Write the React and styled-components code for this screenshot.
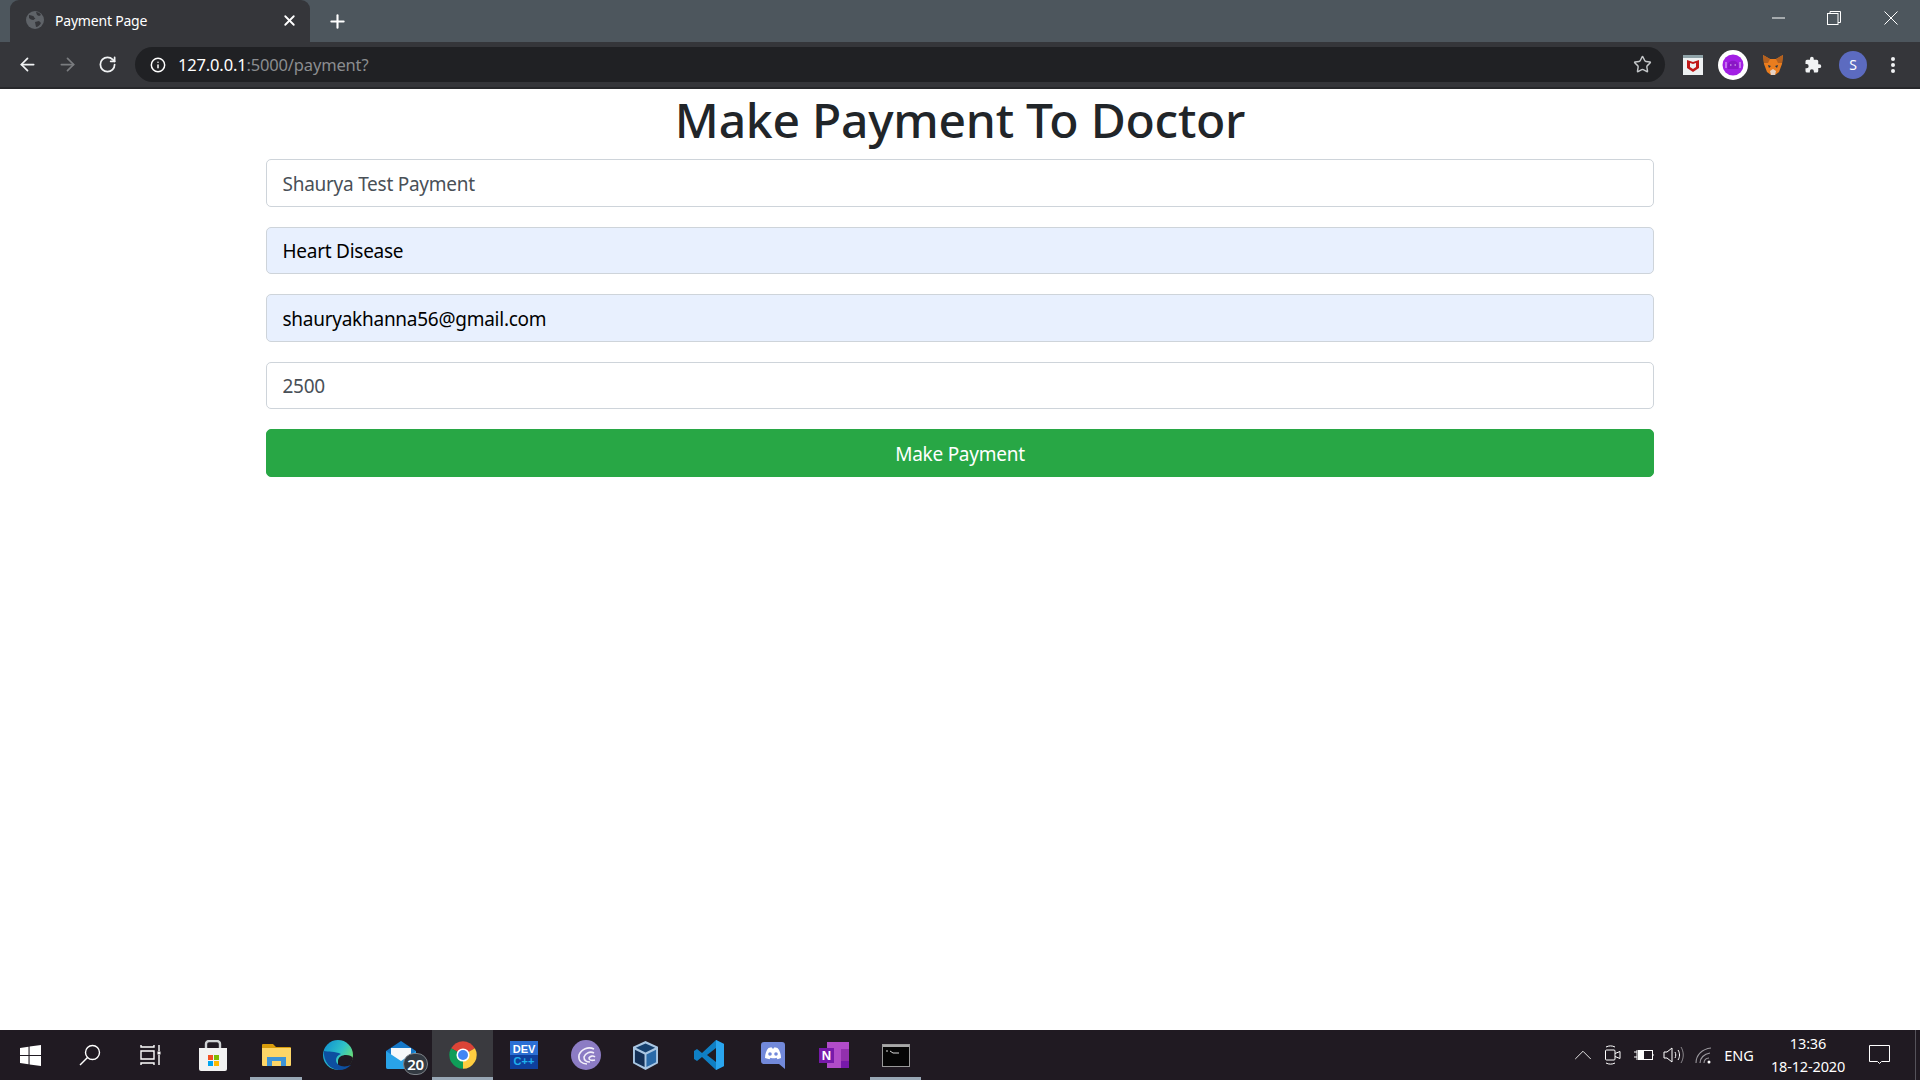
import styled, { createGlobalStyle } from "styled-components";
import { ArrowLeft, ArrowRight, RotateCw, Info, Star, X, Plus, ChevronUp } from "lucide-react";

const GlobalStyle = createGlobalStyle`
  html, body {
    margin: 0;
    padding: 0;
    background: #fff;
    overflow: hidden;
  }
  * { box-sizing: border-box; }
`;

const Screen = styled.div`
  width: 1920px;
  height: 1080px;
  display: flex;
  flex-direction: column;
  font-family: "Noto Sans", "Open Sans", sans-serif;
`;

const TabStrip = styled.div`
  height: 42px;
  background: #4d565d;
  display: flex;
  align-items: flex-end;
  padding-left: 10px;
`;

const Tab = styled.div`
  width: 300px;
  height: 42px;
  background: #35363a;
  border-radius: 9px 9px 0 0;
  display: flex;
  align-items: center;
  padding: 0 12px 2px 16px;
  color: #fff;
`;

const TabTitle = styled.span`
  flex: 1;
  margin-left: 11px;
  font-size: 14px;
  letter-spacing: -0.2px;
`;

const NewTab = styled.div`
  width: 44px;
  height: 42px;
  display: flex;
  align-items: center;
  justify-content: center;
  color: #fff;
  margin-left: 5px;
`;

const WindowControls = styled.div`
  margin-left: auto;
  height: 42px;
  display: flex;
  align-items: flex-start;
  color: #fff;
`;

const WindowButton = styled.div`
  width: ${(p) => p.$w || 56}px;
  height: 36px;
  display: flex;
  align-items: center;
  justify-content: center;
`;

const Toolbar = styled.div`
  height: 47px;
  background: #35363a;
  border-bottom: 2px solid #27282b;
  display: flex;
  align-items: flex-start;
  padding: 5px 7px 0 7px;
`;

const NavButton = styled.div`
  width: 40px;
  height: 35px;
  display: flex;
  align-items: center;
  justify-content: center;
  color: ${(p) => (p.$disabled ? "#7a7c7f" : "#f1f3f4")};
`;

const AddressBar = styled.div`
  flex: 1;
  height: 35px;
  margin: 0 8px 0 8px;
  background: #202124;
  border-radius: 18px;
  display: flex;
  align-items: center;
  padding: 0 13px 0 15px;
  font-size: 16.5px;
  letter-spacing: -0.16px;
  color: #fff;
`;

const Url = styled.span`
  flex: 1;
  margin-left: 12px;
`;

const UrlRest = styled.span`
  color: #8b8d90;
`;

const ExtSlot = styled.div`
  width: 40px;
  height: 35px;
  display: flex;
  align-items: center;
  justify-content: center;
`;

const Avatar = styled.div`
  width: 28px;
  height: 28px;
  border-radius: 50%;
  background: #5c6bc0;
  color: #fff;
  font-size: 14px;
  display: flex;
  align-items: center;
  justify-content: center;
`;

const Page = styled.main`
  flex: 1;
  background: #fff;
  display: flex;
  flex-direction: column;
  align-items: center;
`;

const Heading = styled.h1`
  margin: 1px 0 9px;
  height: 60px;
  line-height: 60px;
  font-size: 48px;
  font-weight: 500;
  letter-spacing: -0.25px;
  color: #212529;
  text-align: center;
`;

const PaymentForm = styled.form`
  width: 1388px;
  display: flex;
  flex-direction: column;
  gap: 20px;
`;

const Field = styled.input`
  width: 100%;
  height: 47.5px;
  padding: 2px 15.5px 0;
  border: 1px solid #ced4da;
  border-radius: 5px;
  outline: none;
  font-family: inherit;
  font-size: 19px;
  letter-spacing: -0.26px;
  color: ${(p) => (p.$autofilled ? "#000" : "#495057")};
  background: ${(p) => (p.$autofilled ? "#e8f0fe" : "#fff")};
`;

const PayButton = styled.button`
  width: 100%;
  height: 48px;
  padding: 2px 0 0;
  border: 1px solid #28a745;
  border-radius: 5px;
  background: #28a745;
  color: #fff;
  font-family: inherit;
  font-size: 19px;
  letter-spacing: -0.26px;
  cursor: pointer;
`;

const Taskbar = styled.footer`
  height: 50px;
  background: #201a22;
  display: flex;
  align-items: stretch;
  color: #fff;
`;

const TaskSlot = styled.div`
  width: ${(p) => p.$w}px;
  flex: none;
  position: relative;
  display: flex;
  align-items: center;
  justify-content: center;
  background: ${(p) => (p.$active ? "#3a3a3f" : "transparent")};
  &::after {
    content: "";
    display: ${(p) => (p.$open ? "block" : "none")};
    position: absolute;
    left: ${(p) => (p.$active ? 0 : 5)}px;
    right: ${(p) => (p.$active ? 0 : 5)}px;
    bottom: 0;
    height: 3px;
    background: #98a7b5;
  }
`;

const MailBadge = styled.span`
  position: absolute;
  left: 34px;
  bottom: 5px;
  width: 25px;
  height: 22px;
  border-radius: 11px;
  background: #333a42;
  border: 1px solid #7d8288;
  font-size: 15px;
  font-weight: 600;
  letter-spacing: -0.3px;
  display: flex;
  align-items: center;
  justify-content: center;
  color: #fff;
`;

const Tray = styled.div`
  margin-left: auto;
  display: flex;
  align-items: center;
`;

const TrayIcon = styled.div`
  width: ${(p) => p.$w || 30}px;
  height: 50px;
  display: flex;
  align-items: center;
  justify-content: center;
  font-size: 14.5px;
`;

const Clock = styled.div`
  width: 70px;
  margin-left: 13px;
  display: flex;
  flex-direction: column;
  align-items: center;
  font-size: 14.5px;
  letter-spacing: -0.15px;
  line-height: 23px;
  white-space: nowrap;
`;

const NotifyEdge = styled.div`
  width: 5px;
  height: 50px;
  border-left: 1px solid #55525a;
`;

const ChromeGlyph = () => (
  <svg width="30" height="30" viewBox="0 0 48 48">
    <path d="M24 24L5 13A22 22 0 0 1 43 13Z" fill="#db4437" />
    <path d="M24 24L43 13A22 22 0 0 1 24 46Z" fill="#ffcd40" />
    <path d="M24 24L24 46A22 22 0 0 1 5 13Z" fill="#0f9d58" />
    <circle cx="24" cy="24" r="10.5" fill="#fff" />
    <circle cx="24" cy="24" r="8" fill="#4285f4" />
  </svg>
);

function App() {
  return (
    <>
      <GlobalStyle />
      <Screen>
        <TabStrip>
          <Tab>
            <svg width="18" height="18" viewBox="0 0 18 18">
              <circle cx="9" cy="9" r="9" fill="#5f6368" />
              <path d="M3 4c2 0 3 1 4 1s1 2 2 2-1 2-2 2-3-1-4-2zM10 1c2 0 4 1 5 3l-2 1-2-1zM9 11l4-1 2 2c-1 2-3 4-5 4z" fill="#35363a" />
            </svg>
            <TabTitle>Payment Page</TabTitle>
            <X size={17} strokeWidth={2.6} />
          </Tab>
          <NewTab>
            <Plus size={21} strokeWidth={2.4} />
          </NewTab>
          <WindowControls>
            <WindowButton>
              <svg width="13" height="2" viewBox="0 0 13 2" stroke="#fff">
                <path d="M0 1h13" />
              </svg>
            </WindowButton>
            <WindowButton>
              <svg width="14" height="14" viewBox="0 0 14 14" fill="none" stroke="#fff">
                <rect x="0.5" y="2.5" width="10.5" height="11" />
                <path d="M3 2.5V.5h10.5v11H11" />
              </svg>
            </WindowButton>
            <WindowButton $w={58}>
              <svg width="14" height="14" viewBox="0 0 14 14" stroke="#fff" strokeWidth="1">
                <path d="M.5.5l13 13M13.5.5l-13 13" />
              </svg>
            </WindowButton>
          </WindowControls>
        </TabStrip>

        <Toolbar>
          <NavButton>
            <ArrowLeft size={21} strokeWidth={2} />
          </NavButton>
          <NavButton $disabled>
            <ArrowRight size={21} strokeWidth={2} />
          </NavButton>
          <NavButton>
            <RotateCw size={19} strokeWidth={2.2} />
          </NavButton>
          <AddressBar>
            <Info size={16} strokeWidth={2.2} />
            <Url>
              127.0.0.1<UrlRest>:5000/payment?</UrlRest>
            </Url>
            <Star size={19} strokeWidth={1.8} color="#c4c7c9" />
          </AddressBar>
          <ExtSlot>
            <svg width="20" height="20" viewBox="0 0 20 20">
              <rect width="20" height="20" fill="#eef1f2" />
              <rect width="20" height="3" fill="#8fa3a8" />
              <path d="M4 5l6 2 6-2v8l-6 4-6-4z" fill="#c01818" />
              <path d="M7 8l3 1 3-1v4l-3 2-3-2z" fill="#eef1f2" />
            </svg>
          </ExtSlot>
          <ExtSlot>
            <svg width="30" height="30" viewBox="0 0 30 30">
              <circle cx="15" cy="15" r="15" fill="#fff" />
              <circle cx="15" cy="15" r="10.5" fill="#a21fe4" />
              <path d="M9.500 16c0-7 11-7 11 0v3h-11z" fill="#8a16c6" />
              <path d="M12 15h1.500M16.500 15h1.500M8 12v6M22 12v6" stroke="#e6c8f5" strokeWidth="1" />
            </svg>
          </ExtSlot>
          <ExtSlot>
            <svg width="22" height="22" viewBox="0 0 22 22">
              <path d="M1 1l7 4h6l7-4-1 9-3 8-4 3H9l-4-3-3-8z" fill="#ea7d1e" />
              <path d="M1 1l7 4-2 4-4 0z" fill="#b3601f" />
              <path d="M21 1l-7 4 2 4 4 0z" fill="#b3601f" />
              <path d="M8 17l3-2 3 2-1 4H9z" fill="#e6d3c5" />
              <path d="M6 11l3 1-2 2zM16 11l-3 1 2 2z" fill="#233447" />
            </svg>
          </ExtSlot>
          <ExtSlot>
            <svg width="18" height="18" viewBox="0 0 24 24" fill="#f1f3f4">
              <path d="M20.5 11H19V7a2 2 0 0 0-2-2h-4V3.500a2.500 2.500 0 0 0-5 0V5H4a2 2 0 0 0-2 2v3.800h1.500a2.700 2.700 0 0 1 0 5.400H2V20a2 2 0 0 0 2 2h3.800v-1.500a2.700 2.700 0 0 1 5.400 0V22H17a2 2 0 0 0 2-2v-4h1.500a2.500 2.500 0 0 0 0-5z" />
            </svg>
          </ExtSlot>
          <ExtSlot>
            <Avatar>S</Avatar>
          </ExtSlot>
          <ExtSlot>
            <svg width="4" height="16" viewBox="0 0 4 16" fill="#f1f3f4">
              <circle cx="2" cy="2" r="2" />
              <circle cx="2" cy="8" r="2" />
              <circle cx="2" cy="14" r="2" />
            </svg>
          </ExtSlot>
        </Toolbar>

        <Page>
          <Heading>Make Payment To Doctor</Heading>
          <PaymentForm onSubmit={(e) => e.preventDefault()}>
            <Field readOnly value="Shaurya Test Payment" />
            <Field readOnly $autofilled value="Heart Disease" />
            <Field readOnly $autofilled value="shauryakhanna56@gmail.com" />
            <Field readOnly value="2500" />
            <PayButton>Make Payment</PayButton>
          </PaymentForm>
        </Page>

        <Taskbar>
          <TaskSlot $w={60}>
            <svg width="21" height="21" viewBox="0 0 21 21" fill="#fff">
              <path d="M0 3l8.500-1.200v8.100H0zM9.600 1.600L21 0v9.900H9.600zM0 11h8.500v8.200L0 18zM9.600 11H21v10L9.600 19.400z" />
            </svg>
          </TaskSlot>
          <TaskSlot $w={60}>
            <svg width="22" height="22" viewBox="0 0 22 22" fill="none" stroke="#fff" strokeWidth="1.4">
              <circle cx="13.500" cy="8.500" r="7" />
              <path d="M8.500 13.500L1 21" />
            </svg>
          </TaskSlot>
          <TaskSlot $w={61}>
            <svg width="22" height="20" viewBox="0 0 22 20" fill="none" stroke="#fff" strokeWidth="1.4">
              <path d="M1 0v2h13V0M1 6h13v8H1zM1 20v-2h13v2M19 0v6M19 10v10" />
              <rect x="17.500" y="6.500" width="3" height="3" fill="#fff" stroke="none" />
            </svg>
          </TaskSlot>
          <TaskSlot $w={64}>
            <svg width="30" height="31" viewBox="0 0 30 31">
              <path d="M8 9V4a3 3 0 0 1 3-3h8a3 3 0 0 1 3 3v5" fill="none" stroke="#cfd2d4" strokeWidth="2.4" />
              <path d="M1 8h28v21a2 2 0 0 1-2 2H3a2 2 0 0 1-2-2z" fill="#f2f2f2" />
              <rect x="10" y="15" width="5" height="5" fill="#f25022" />
              <rect x="16" y="15" width="5" height="5" fill="#7fba00" />
              <rect x="10" y="21" width="5" height="5" fill="#00a4ef" />
              <rect x="16" y="21" width="5" height="5" fill="#ffb900" />
            </svg>
          </TaskSlot>
          <TaskSlot $w={62} $open>
            <svg width="29" height="24" viewBox="0 0 29 24">
              <path d="M0 2a1 1 0 0 1 1-1h10l3 3h14a1 1 0 0 1 1 1v4H0z" fill="#d89c0b" />
              <path d="M0 5h29v17a1 1 0 0 1-1 1H1a1 1 0 0 1-1-1z" fill="#fdd667" />
              <path d="M5 23v-9h19v9h-5v-5h-9v5z" fill="#3e94d6" />
            </svg>
          </TaskSlot>
          <TaskSlot $w={62}>
            <svg width="30" height="30" viewBox="0 0 30 30">
              <defs>
                <linearGradient id="edgeTop" x1="0" y1="0" x2="1" y2="0.6">
                  <stop offset="0" stopColor="#0c8ad2" />
                  <stop offset="0.6" stopColor="#2fc2c8" />
                  <stop offset="1" stopColor="#6ee070" />
                </linearGradient>
              </defs>
              <circle cx="15" cy="15" r="15" fill="url(#edgeTop)" />
              <path d="M15 21c0-4 4-6 8-6 3 0 6 1 7 3-1 6-6 12-15 12z" fill="#201a22" />
              <path d="M1 11C0 22 8 30 16 30c5 0 9-2 12-5-7 3-15 1-15-5 0-3 2-5 5-6-6-3-13-2-17-3z" fill="#0d4fa0" />
            </svg>
          </TaskSlot>
          <TaskSlot $w={63}>
            <svg width="30" height="28" viewBox="0 0 30 28">
              <path d="M0 10L15 0l15 10v16a2 2 0 0 1-2 2H2a2 2 0 0 1-2-2z" fill="#1678c8" />
              <path d="M5 7h20v9l-10 6-10-6z" fill="#f5f8fa" />
              <path d="M0 10l15 10 15-10v16a2 2 0 0 1-2 2H2a2 2 0 0 1-2-2z" fill="#29a3e8" />
            </svg>
            <MailBadge>20</MailBadge>
          </TaskSlot>
          <TaskSlot $w={61} $active $open>
            <ChromeGlyph />
          </TaskSlot>
          <TaskSlot $w={62}>
            <svg width="28" height="28" viewBox="0 0 28 28">
              <rect width="28" height="28" fill="#0f3f9c" />
              <rect width="28" height="14" fill="#2b6fd4" />
              <text x="14" y="11.500" textAnchor="middle" fontSize="11" fontWeight="700" fill="#fff" fontFamily="Liberation Sans">DEV</text>
              <text x="14" y="24" textAnchor="middle" fontSize="11" fontWeight="700" fill="#1fb0ee" fontFamily="Liberation Sans">C++</text>
            </svg>
          </TaskSlot>
          <TaskSlot $w={61}>
            <svg width="30" height="30" viewBox="0 0 30 30" fill="none">
              <circle cx="15" cy="15" r="15" fill="#8c7cc4" />
              <path d="M23 9a11 11 0 0 0-15 6c-1 6 3 9 8 9M23 13a7 7 0 0 0-10 4c0 3 2 5 6 5M24 17a4 4 0 0 0-6 1c0 2 2 3 6 2" stroke="#f2effa" strokeWidth="1.600" />
            </svg>
          </TaskSlot>
          <TaskSlot $w={59}>
            <svg width="25" height="29" viewBox="0 0 26 30">
              <path d="M13 0l13 6v17l-13 7-13-7V6z" fill="#a9c6e2" />
              <path d="M13 2.500l10 4.500-10 5L3 7z" fill="#16406e" />
              <path d="M2 9l10 5v13L2 22z" fill="#132f55" />
              <path d="M24 9l-10 5v13l10-5z" fill="#2a6aa8" />
            </svg>
          </TaskSlot>
          <TaskSlot $w={67}>
            <svg width="30" height="30" viewBox="0 0 30 30">
              <path d="M22 0l8 4v22l-8 4L8 17l-5 4-3-2v-8l3-2 5 4z" fill="#0f7fc4" />
              <path d="M22 0l8 4v22l-8 4z" fill="#2aa5ee" />
              <path d="M22 8v14l-9-7z" fill="#201a22" />
            </svg>
          </TaskSlot>
          <TaskSlot $w={61}>
            <svg width="24" height="27" viewBox="0 0 24 27">
              <path d="M3 0h18a3 3 0 0 1 3 3v24l-6-5H3a3 3 0 0 1-3-3V3a3 3 0 0 1 3-3z" fill="#7289da" />
              <path d="M4 16c0-4 1.500-8 3.500-10l3-.8.800 1.300h1.400l.8-1.300 3 .8c2 2 3.500 6 3.500 10l-3.500 1.300-1-1.500c-2 .7-4 .7-6 0l-1 1.500z" fill="#fff" />
              <circle cx="9" cy="12" r="1.800" fill="#7289da" />
              <circle cx="15" cy="12" r="1.800" fill="#7289da" />
            </svg>
          </TaskSlot>
          <TaskSlot $w={62}>
            <svg width="30" height="26" viewBox="0 0 30 26">
              <rect x="8" width="22" height="26" fill="#b14cc9" />
              <rect x="22" y="7" width="8" height="12" fill="#9230ad" />
              <rect x="22" y="19" width="8" height="7" fill="#7719aa" />
              <rect y="6" width="15" height="15" fill="#7719aa" />
              <text x="7.500" y="18" textAnchor="middle" fontSize="13" fontWeight="700" fill="#fff" fontFamily="Liberation Sans">N</text>
            </svg>
          </TaskSlot>
          <TaskSlot $w={61} $open>
            <svg width="28" height="23" viewBox="0 0 28 23">
              <rect x="0.500" y="0.500" width="27" height="22" fill="#050505" stroke="#9a9a9a" />
              <rect x="1" y="1" width="26" height="2" fill="#a8a8a8" />
              <path d="M4 7h2M8 7l3 2h6" stroke="#d8d8d8" strokeWidth="1" fill="none" />
            </svg>
          </TaskSlot>
          <Tray>
            <TrayIcon>
              <ChevronUp size={32} strokeWidth={0.7} />
            </TrayIcon>
            <TrayIcon>
              <svg width="18" height="20" viewBox="0 0 18 20" fill="none" stroke="#fff" strokeWidth="1">
                <rect x="1.500" y="5" width="9.500" height="10" rx="1" />
                <path d="M11 8.500l5-2v7l-5-2M2 2c3-1.500 6-1.500 9 0M2 18c3 1.500 6 1.500 9 0" />
              </svg>
            </TrayIcon>
            <TrayIcon>
              <svg width="21" height="14" viewBox="0 0 21 14" fill="none" stroke="#fff" strokeWidth="1">
                <rect x="5.500" y="2.500" width="14" height="9" />
                <rect x="6" y="3" width="5" height="8" fill="#fff" stroke="none" />
                <path d="M20 6v2M1 4h3M1 9h3M4 2v10" />
              </svg>
            </TrayIcon>
            <TrayIcon>
              <svg width="21" height="18" viewBox="0 0 21 18" fill="none" stroke="#fff" strokeWidth="1">
                <path d="M1 6v6h3l5 4V2L4 6zM12 6c1 2 1 4 0 6M15 4c2 3 2 7 0 10" />
                <path d="M18 1c3 5 3 11 0 16" stroke="#8a878c" />
              </svg>
            </TrayIcon>
            <TrayIcon>
              <svg width="17" height="17" viewBox="0 0 17 17" fill="none" stroke="#9c999f" strokeWidth="1.100">
                <path d="M1 16C1 8 7 2 16 1M5 16c0-5 4-9 10-10M9 16c0-3 2-5 5-5" />
                <circle cx="14" cy="15" r="1.500" fill="#fff" stroke="none" />
              </svg>
            </TrayIcon>
            <TrayIcon $w={42}>ENG</TrayIcon>
            <Clock>
              <span>13:36</span>
              <span>18-12-2020</span>
            </Clock>
            <TrayIcon $w={72}>
              <svg width="21" height="20" viewBox="0 0 21 20" fill="none" stroke="#fff">
                <path d="M.5.5h20v16h-8l-2 2-2-2h-8z" />
              </svg>
            </TrayIcon>
            <NotifyEdge />
          </Tray>
        </Taskbar>
      </Screen>
    </>
  );
}

export default App;
